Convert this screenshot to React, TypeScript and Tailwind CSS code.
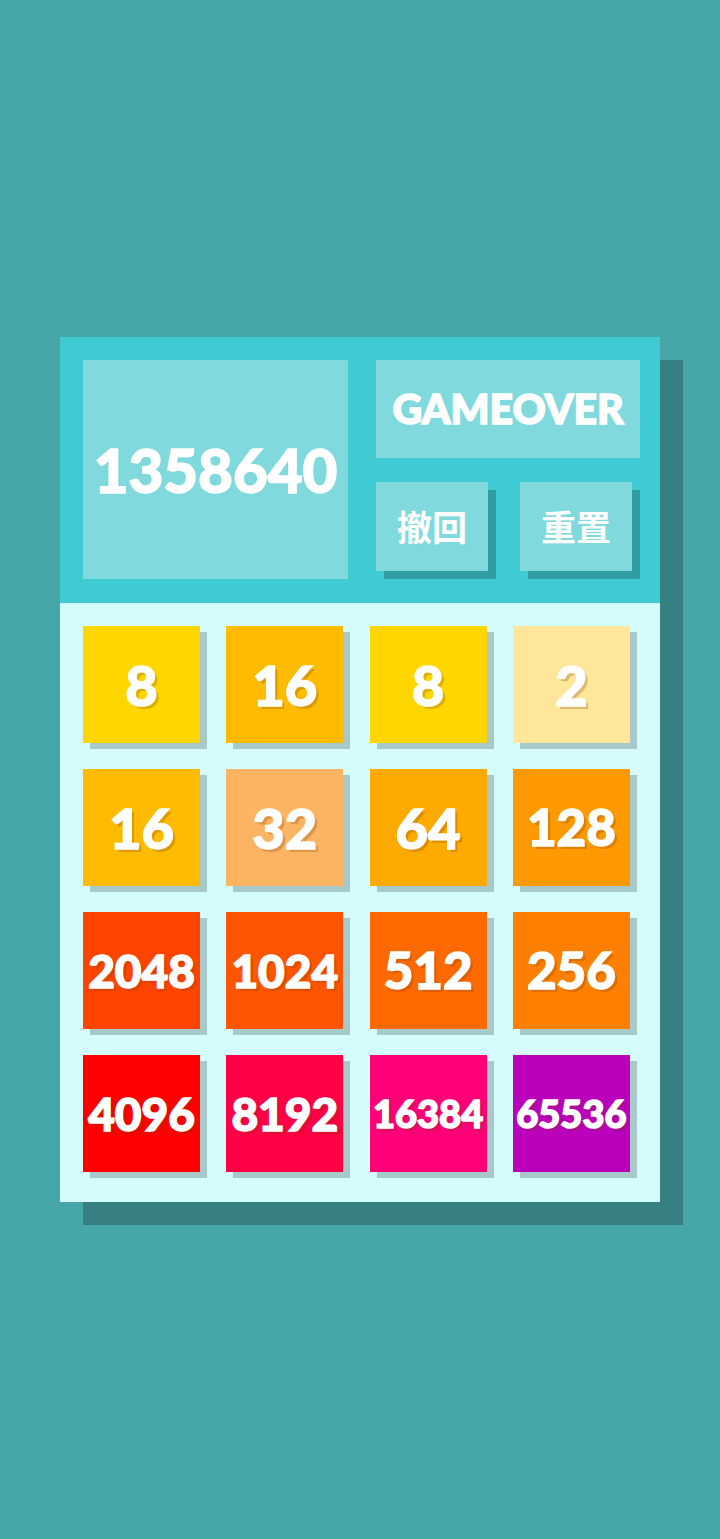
const rows: { v: number; bg: string }[][] = [
  [
    { v: 8, bg: "bg-[#ffd600]" },
    { v: 16, bg: "bg-[#ffbb00]" },
    { v: 8, bg: "bg-[#ffd600]" },
    { v: 2, bg: "bg-[#fee79b]" },
  ],
  [
    { v: 16, bg: "bg-[#ffbb00]" },
    { v: 32, bg: "bg-[#fdb462]" },
    { v: 64, bg: "bg-[#ffaa00]" },
    { v: 128, bg: "bg-[#ff9900]" },
  ],
  [
    { v: 2048, bg: "bg-[#ff4400]" },
    { v: 1024, bg: "bg-[#ff5500]" },
    { v: 512, bg: "bg-[#ff6a00]" },
    { v: 256, bg: "bg-[#ff8000]" },
  ],
  [
    { v: 4096, bg: "bg-[#ff0000]" },
    { v: 8192, bg: "bg-[#ff0044]" },
    { v: 16384, bg: "bg-[#ff0077]" },
    { v: 65536, bg: "bg-[#bb00bb]" },
  ],
];

function sizeFor(v: number) {
  const n = String(v).length;
  if (n <= 2) return "text-[56px]";
  if (n === 3) return "text-[51px]";
  if (n === 4) return "text-[46px]";
  return "text-[38px]";
}

function Tile({ v, bg }: { v: number; bg: string }) {
  return (
    <div
      className={`flex h-[117px] w-[117px] items-center justify-center shadow-[7px_6px_0_#a8c9ca] ${bg}`}
    >
      <span
        className={`font-black text-white [-webkit-text-stroke:1.5px_white] [text-shadow:3px_3px_0_rgba(120,60,0,0.25)] ${sizeFor(v)}`}
      >
        {v}
      </span>
    </div>
  );
}

export default function App() {
  return (
    <div
      className="min-h-[1539px] bg-[#46a6a8] px-[60px] pt-[337px]"
      style={{ fontFamily: "Lato, 'Noto Sans CJK SC', sans-serif" }}
    >
      <div className="w-[600px] shadow-[23px_23px_0_#378081]">
        <div className="flex gap-[28px] bg-[#40cbd2] pb-[24px] pl-[23px] pr-[20px] pt-[23px]">
          <div className="flex h-[219px] w-[265px] items-center justify-center bg-[#80dadd]">
            <span className="text-[60px] font-black text-white [-webkit-text-stroke:1.5px_white]">1358640</span>
          </div>
          <div className="flex w-[264px] flex-col">
            <div className="flex h-[98px] items-center justify-center bg-[#80dadd]">
              <span className="text-[41px] font-black text-white [-webkit-text-stroke:1.5px_white]">GAMEOVER</span>
            </div>
            <div className="mt-[24px] flex justify-between pr-[8px]">
              <button className="flex h-[89px] w-[112px] items-center justify-center bg-[#80dadd] text-[35px] font-bold text-white shadow-[8px_8px_0_#2e9ea3]" style={{ fontFamily: "'Noto Sans CJK SC', sans-serif" }}>
                撤回
              </button>
              <button className="flex h-[89px] w-[112px] items-center justify-center bg-[#80dadd] text-[35px] font-bold text-white shadow-[8px_8px_0_#2e9ea3]" style={{ fontFamily: "'Noto Sans CJK SC', sans-serif" }}>
                重置
              </button>
            </div>
          </div>
        </div>
        <div className="grid grid-cols-[repeat(4,117px)] gap-x-[26.3px] gap-y-[26px] bg-[#d4fcfc] pb-[30px] pl-[23px] pt-[23px]">
          {rows.flat().map((t, i) => (
            <Tile key={i} v={t.v} bg={t.bg} />
          ))}
        </div>
      </div>
    </div>
  );
}
